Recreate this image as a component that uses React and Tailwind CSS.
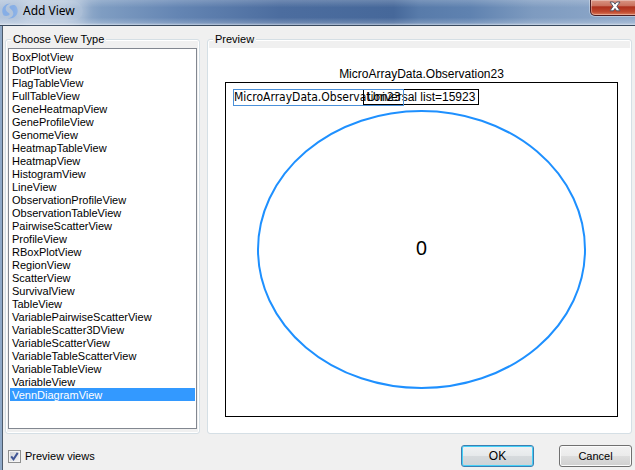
import { useState } from "react";

const VIEW_TYPES = [
  "BoxPlotView",
  "DotPlotView",
  "FlagTableView",
  "FullTableView",
  "GeneHeatmapView",
  "GeneProfileView",
  "GenomeView",
  "HeatmapTableView",
  "HeatmapView",
  "HistogramView",
  "LineView",
  "ObservationProfileView",
  "ObservationTableView",
  "PairwiseScatterView",
  "ProfileView",
  "RBoxPlotView",
  "RegionView",
  "ScatterView",
  "SurvivalView",
  "TableView",
  "VariablePairwiseScatterView",
  "VariableScatter3DView",
  "VariableScatterView",
  "VariableTableScatterView",
  "VariableTableView",
  "VariableView",
  "VennDiagramView",
];

function AppLogo() {
  return (
    <svg className="size-4 shrink-0" viewBox="0 0 16 16" aria-hidden="true">
      <path
        d="M8.500 0.500C4 0.300 0.300 3.700 0.300 8c0 1.800.6 3.300 1.500 4.600C4 13.200 7.400 12.900 7.600 11.200 7.700 9.700 3.600 9.300 3.700 5.600 3.800 3 6 1.100 8.500.5Z"
        fill="#86aee6"
      />
      <path
        d="M5.500 15.300c5.500 1.200 10.200-2.600 10.200-7.300 0-2.400-1-4.500-2.700-5.800C11.500 1.500 8 2.100 7.400 3.900 7 5.600 11.400 6.900 11.300 10.700 11.200 13.200 8.500 15.100 5.500 15.300Z"
        fill="#86aee6"
      />
    </svg>
  );
}

function TitleBar() {
  return (
    <header className="flex h-[26px] shrink-0 items-start justify-between border-b border-[#3a4b60] bg-[linear-gradient(to_bottom,#ffffff33,#ffffff00_30%,#ffffff00_70%,#ffffff33_92%,#ffffff99),linear-gradient(to_right,#b4c5db,#a9bdd6_10%,#7f9dc2_16%,#6485b3_28%,#4c6d9f_44%,#46689a_62%,#587baa_66%,#5f82b0_74%,#7e9bc0_84%,#8fa9ca)] pl-0.5">
      <div className="flex h-[22px] items-center gap-1">
        <AppLogo />
        <h1 className="rounded-full bg-white/20 pr-2 pl-px font-['Noto_Sans','Open_Sans',sans-serif] text-[12px] leading-5 text-black shadow-[0_0_8px_4px_#ffffff33]">
          Add View
        </h1>
      </div>
      <button
        type="button"
        aria-label="Close"
        className="-mr-1 flex h-4 w-[49px] items-start justify-center rounded-b-[5px] border border-t-0 border-[#4b1c22] bg-[linear-gradient(to_bottom,#d99584,#c9705d_40%,#ac2f1c_45%,#c14a30_80%,#dd8263)] pt-px shadow-[inset_0_0_0_1px_#ffffff55,0_0_0_1px_#ffffff55]"
      >
        <svg className="h-[11px] w-3" viewBox="0 0 12 11" aria-hidden="true">
          <path
            d="M1 1h3.300L6 3.200 7.700 1H11L7.900 5.300 11 9.800H7.700L6 7.500 4.300 9.800H1l3.100-4.500Z"
            fill="#ffffff"
            stroke="#535666"
            strokeWidth="1"
          />
        </svg>
      </button>
    </header>
  );
}

function VennPreview() {
  return (
    <figure className="flex min-h-0 flex-1 flex-col bg-white pt-[18px] pr-3 pb-[15px] pl-4 font-['Liberation_Sans',Arial,sans-serif] text-[12px] leading-4">
      <figcaption className="text-center">MicroArrayData.Observation23</figcaption>
      <div className="relative flex-1 border border-black px-8 py-7">
        <div className="relative flex h-full items-center justify-center pb-1">
          <svg className="absolute inset-0 h-full w-full overflow-visible" aria-hidden="true">
            <ellipse cx="50%" cy="50%" rx="50%" ry="50%" fill="none" stroke="#1e90ff" strokeWidth="2" />
          </svg>
          <span className="font-['Noto_Sans','Open_Sans',sans-serif] text-[20px] leading-6">0</span>
        </div>
        <span className="absolute top-[6px] left-[137px] h-4 border border-black px-[3px] leading-[15px] whitespace-nowrap">
          Universal list=15923
        </span>
        <span className="absolute top-[6px] left-[7px] h-[17px] w-[171px] border border-[#4a90d9] font-['DejaVu_Sans_Condensed','DejaVu_Sans',sans-serif] leading-[15px] whitespace-nowrap">
          MicroArrayData.Observation23
        </span>
      </div>
    </figure>
  );
}

export default function App() {
  const [view, setView] = useState("VennDiagramView");
  const [preview, setPreview] = useState(true);

  return (
    <div className="flex min-h-screen flex-col bg-[#f0f0f0] font-['Liberation_Sans',Arial,sans-serif] text-[11px] text-black">
      <TitleBar />
      <main className="flex flex-1 flex-col border-l-2 border-[#8fa9c8] pt-[6px] pr-[3px] shadow-[inset_1px_0_0_#4d5b6b]">
        <div className="flex flex-1 gap-[7px] pl-[3px]">
          <section className="relative flex w-[195px] shrink-0 flex-col pt-4">
            <div className="pointer-events-none absolute inset-x-0 top-[7px] bottom-0 rounded-[3px] border border-[#d5dfe5] shadow-[inset_0_0_0_1px_#ffffff]" />
            <label
              htmlFor="view-type"
              className="absolute top-0 left-[6px] bg-[#f0f0f0] px-0.5 leading-[14px]"
            >
              Choose View Type
            </label>
            <select
              id="view-type"
              size={27}
              value={view}
              onChange={(e) => setView(e.target.value)}
              className="relative mx-[3px] mb-[5px] h-[381px] flex-1 appearance-none overflow-hidden rounded-none border border-[#828790] bg-white p-px font-['Liberation_Sans',Arial,sans-serif] outline-none"
            >
              {VIEW_TYPES.map((name) => (
                <option
                  key={name}
                  value={name}
                  className="h-[13px] min-h-0 px-0.5 pt-px pb-0 leading-[13px] text-black checked:bg-[#3399ff] checked:bg-[linear-gradient(#3399ff,#3399ff)] checked:text-white"
                >
                  {name}
                </option>
              ))}
            </select>
          </section>

          <section className="relative flex min-w-0 flex-1 flex-col px-0.5 pt-4 pb-0.5">
            <div className="pointer-events-none absolute inset-x-0 top-[7px] bottom-0 rounded-[3px] border border-[#d5dfe5] shadow-[inset_0_0_0_1px_#ffffff]" />
            <h2 className="absolute top-0 left-[6px] bg-[#f0f0f0] px-0.5 leading-[14px]">Preview</h2>
            {preview && <VennPreview />}
          </section>
        </div>

        <footer className="flex items-center justify-between pt-[11px] pb-[3px] pl-[6px]">
          <label className="flex items-center gap-1">
            <span className="relative flex size-[13px]">
              <input
                type="checkbox"
                checked={preview}
                onChange={(e) => setPreview(e.target.checked)}
                className="peer size-[13px] appearance-none border border-[#8e8f8f] bg-[linear-gradient(135deg,#cbcfd5,#f6f6f6)] shadow-[inset_0_0_0_1px_#f4f4f4]"
              />
              <svg
                className="pointer-events-none absolute inset-0 size-[13px] opacity-0 peer-checked:opacity-100"
                viewBox="0 0 13 13"
                aria-hidden="true"
              >
                <path d="M3.200 6.300 5.500 9.300 9.700 2.900" fill="none" stroke="#3f5595" strokeWidth="2" />
              </svg>
            </span>
            <span>Preview views</span>
          </label>
          <div className="flex gap-[25px]">
            <button
              type="button"
              className="h-[22px] w-[73px] rounded-[3px] border border-[#3c7fb1] bg-[linear-gradient(to_bottom,#f0f2f3,#e6e9eb_48%,#d6dadd_52%,#cdd3d6)] text-[12px] leading-4 shadow-[inset_0_0_0_1px_#45d0f8]"
            >
              OK
            </button>
            <button
              type="button"
              className="h-[22px] w-[73px] rounded-[3px] border border-[#707070] bg-[linear-gradient(to_bottom,#f2f2f2,#ebebeb_48%,#dddddd_52%,#cfcfcf)] shadow-[inset_0_0_0_1px_#fbfbfb]"
            >
              Cancel
            </button>
          </div>
        </footer>
      </main>
    </div>
  );
}
